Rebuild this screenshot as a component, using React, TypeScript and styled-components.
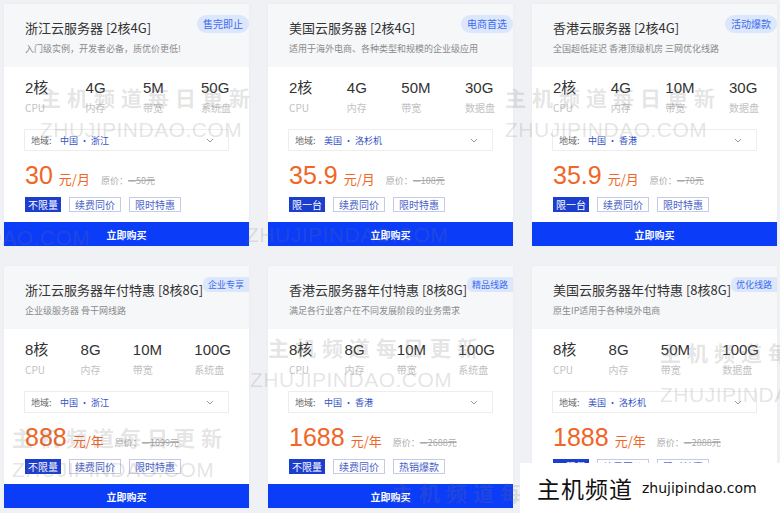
import React from "react";
import styled, { createGlobalStyle } from "styled-components";

const GlobalStyle = createGlobalStyle`
  html, body { margin: 0; padding: 0; background: #f0f1f4; }
  body { font-family: "Noto Sans CJK SC", "Noto Sans", sans-serif; }
  * { box-sizing: border-box; }
`;

type Card = {
  title: string;
  badge: string;
  sub: string;
  specs: [string, string][];
  region: string;
  price: string;
  unit: string;
  orig: string;
  tags: string[];
};

const cards: Card[] = [
  { title: "浙江云服务器 [2核4G]", badge: "售完即止", sub: "入门级实例，开发者必备，质优价更低!", specs: [["2核", "CPU"], ["4G", "内存"], ["5M", "带宽"], ["50G", "系统盘"]], region: "中国 · 浙江", price: "30", unit: "元/月", orig: "50元", tags: ["不限量", "续费同价", "限时特惠"] },
  { title: "美国云服务器 [2核4G]", badge: "电商首选", sub: "适用于海外电商、各种类型和规模的企业级应用", specs: [["2核", "CPU"], ["4G", "内存"], ["50M", "带宽"], ["30G", "数据盘"]], region: "美国 · 洛杉机", price: "35.9", unit: "元/月", orig: "108元", tags: ["限一台", "续费同价", "限时特惠"] },
  { title: "香港云服务器 [2核4G]", badge: "活动爆款", sub: "全国超低延迟 香港顶级机房 三网优化线路", specs: [["2核", "CPU"], ["4G", "内存"], ["10M", "带宽"], ["30G", "数据盘"]], region: "中国 · 香港", price: "35.9", unit: "元/月", orig: "70元", tags: ["限一台", "续费同价", "限时特惠"] },
  { title: "浙江云服务器年付特惠 [8核8G]", badge: "企业专享", sub: "企业级服务器 骨干网线路", specs: [["8核", "CPU"], ["8G", "内存"], ["10M", "带宽"], ["100G", "系统盘"]], region: "中国 · 浙江", price: "888", unit: "元/年", orig: "1099元", tags: ["不限量", "续费同价", "限时特惠"] },
  { title: "香港云服务器年付特惠 [8核8G]", badge: "精品线路", sub: "满足各行业客户在不同发展阶段的业务需求", specs: [["8核", "CPU"], ["8G", "内存"], ["10M", "带宽"], ["100G", "系统盘"]], region: "中国 · 香港", price: "1688", unit: "元/年", orig: "2688元", tags: ["不限量", "续费同价", "热销爆款"] },
  { title: "美国云服务器年付特惠 [8核8G]", badge: "优化线路", sub: "原生IP适用于各种境外电商", specs: [["8核", "CPU"], ["8G", "内存"], ["50M", "带宽"], ["100G", "数据盘"]], region: "美国 · 洛杉机", price: "1888", unit: "元/年", orig: "2888元", tags: ["不限量", "续费同价", "限时特惠"] },
];

const Page = styled.div`
  position: relative;
  width: 780px;
  height: 513px;
  overflow: hidden;
  padding: 4px 3px 0 4px;
  display: grid;
  grid-template-columns: repeat(3, 245px);
  grid-auto-rows: 242px;
  column-gap: 19px;
  row-gap: 20px;
`;

const CardBox = styled.div`
  position: relative;
  overflow: hidden;
  background: #fff;
  display: flex;
  flex-direction: column;
  box-shadow: 0 0 3px rgba(0, 0, 0, 0.03);
`;

const Header = styled.div`
  height: 63px;
  background: #f6f7f9;
  padding: 14px 21px 0;
`;

const Title = styled.div`
  font-size: 13px;
  line-height: 20px;
  color: #333;
  white-space: nowrap;
`;

const Sub = styled.div`
  margin-top: 4px;
  font-size: 9px;
  line-height: 14px;
  color: #8a8a8a;
  white-space: nowrap;
`;

const Badge = styled.div<{ $alt?: boolean }>`
  position: absolute;
  top: 11px;
  ${(p) => (p.$alt ? "right: 0;" : "left: 193px;")}
  height: ${(p) => (p.$alt ? "15px" : "18px")};
  line-height: ${(p) => (p.$alt ? "15px" : "18px")};
  padding: 0 ${(p) => (p.$alt ? "5px" : "6px")};
  border-radius: ${(p) => (p.$alt ? "6px 0 0 6px" : "9px")};
  background: #dce7fb;
  color: #3c6cf0;
  font-size: ${(p) => (p.$alt ? "9px" : "10px")};
  white-space: nowrap;
`;

const Specs = styled.div`
  display: flex;
  justify-content: space-between;
  padding: 12px 18px 0 21px;
`;

const Spec = styled.div`
  display: flex;
  flex-direction: column;
`;

const SpecValue = styled.div`
  font-family: "Liberation Sans", "Noto Sans CJK SC", sans-serif;
  font-size: 15px;
  line-height: 18px;
  color: #333;
`;

const SpecLabel = styled.div`
  margin-top: 4px;
  font-size: 10px;
  line-height: 14px;
  color: #c2c2c2;
  white-space: nowrap;
`;

const Select = styled.div`
  margin: 14px 20px 0;
  height: 22px;
  border: 1px solid #ededed;
  display: flex;
  align-items: center;
  padding: 0 14px 0 6px;
  font-size: 9px;
`;

const SelectLabel = styled.span`
  color: #666;
  width: 29px;
`;

const SelectValue = styled.span`
  color: #3553c4;
  flex: 1;
`;

const PriceRow = styled.div`
  margin-top: 8px;
  height: 32px;
  padding: 0 21px;
  display: flex;
  align-items: baseline;
  line-height: 32px;
`;

const Price = styled.span`
  font-family: "Liberation Sans", sans-serif;
  font-size: 25px;
  color: #ef6626;
`;

const Unit = styled.span`
  margin-left: 6px;
  font-size: 13px;
  color: #ef6626;
`;

const Orig = styled.span`
  margin-left: 11px;
  font-size: 9px;
  color: #aaa;
  s { text-decoration: line-through; }
`;

const Tags = styled.div`
  margin-top: 6px;
  padding: 0 21px;
  display: flex;
  gap: 8px;
`;

const Tag = styled.span<{ $solid?: boolean }>`
  height: 15px;
  line-height: 13px;
  font-size: 10px;
  padding: 0 ${(p) => (p.$solid ? "2px" : "5px")};
  border: 1px solid ${(p) => (p.$solid ? "#1c3ecf" : "#c3cbe9")};
  background: ${(p) => (p.$solid ? "#1c3ecf" : "#fff")};
  color: ${(p) => (p.$solid ? "#fff" : "#4a62c8")};
  white-space: nowrap;
`;

const BuyButton = styled.button`
  margin-top: auto;
  height: 24px;
  border: 0;
  background: #0b3cf8;
  color: #fff;
  font-family: "Noto Sans CJK SC", sans-serif;
  font-size: 10px;
  font-weight: 700;
  padding: 0;
`;

const Mark = styled.div<{ $en?: boolean }>`
  position: absolute;
  pointer-events: none;
  white-space: nowrap;
  color: rgba(120, 120, 120, 0.2);
  font-family: ${(p) => (p.$en ? '"Liberation Sans", sans-serif' : '"Noto Sans CJK SC", sans-serif')};
  font-size: 21px;
  font-weight: ${(p) => (p.$en ? 400 : 700)};
  letter-spacing: ${(p) => (p.$en ? "0.5px" : "6px")};
  line-height: 26px;
`;

const LogoBox = styled.div`
  position: absolute;
  left: 520px;
  bottom: 0;
  width: 260px;
  height: 50px;
  background: #fff;
  display: flex;
  align-items: center;
  padding-left: 17px;
  gap: 9px;
`;

const LogoCn = styled.span`
  font-family: "Noto Sans CJK SC", sans-serif;
  font-size: 23px;
  letter-spacing: 1px;
  color: #111;
`;

const LogoEn = styled.span`
  font-family: "DejaVu Sans", sans-serif;
  font-size: 14px;
  color: #111;
`;

const Chevron = () => (
  <svg width="8" height="5" viewBox="0 0 8 5">
    <path d="M1 1l3 3 3-3" fill="none" stroke="#999" strokeWidth="1" />
  </svg>
);

const marksCn: [number, number][] = [
  [40, 84], [505, 84], [268, 334], [660, 339], [12, 424], [392, 479],
];
const marksEn: [number, number][] = [
  [40, 117], [505, 117], [-112, 225], [246, 222], [250, 367], [660, 382], [12, 457],
];

export default function App() {
  return (
    <>
      <GlobalStyle />
      <Page>
        {cards.map((c, i) => (
          <CardBox key={i}>
            <Header>
              <Title>{c.title}</Title>
              <Sub>{c.sub}</Sub>
            </Header>
            <Badge $alt={i >= 3}>{c.badge}</Badge>
            <Specs>
              {c.specs.map(([v, l]) => (
                <Spec key={l + v}>
                  <SpecValue>{v}</SpecValue>
                  <SpecLabel>{l}</SpecLabel>
                </Spec>
              ))}
            </Specs>
            <Select>
              <SelectLabel>地域:</SelectLabel>
              <SelectValue>{c.region}</SelectValue>
              <Chevron />
            </Select>
            <PriceRow>
              <Price>{c.price}</Price>
              <Unit>{c.unit}</Unit>
              <Orig>
                原价：<s>—{c.orig}</s>
              </Orig>
            </PriceRow>
            <Tags>
              {c.tags.map((t, j) => (
                <Tag key={t} $solid={j === 0}>
                  {t}
                </Tag>
              ))}
            </Tags>
            <BuyButton>立即购买</BuyButton>
          </CardBox>
        ))}
        {marksCn.map(([x, y], i) => (
          <Mark key={"c" + i} style={{ left: x, top: y }}>
            主机频道每日更新
          </Mark>
        ))}
        {marksEn.map(([x, y], i) => (
          <Mark key={"e" + i} $en style={{ left: x, top: y }}>
            ZHUJIPINDAO.COM
          </Mark>
        ))}
        <LogoBox>
          <LogoCn>主机频道</LogoCn>
          <LogoEn>zhujipindao.com</LogoEn>
        </LogoBox>
      </Page>
    </>
  );
}
